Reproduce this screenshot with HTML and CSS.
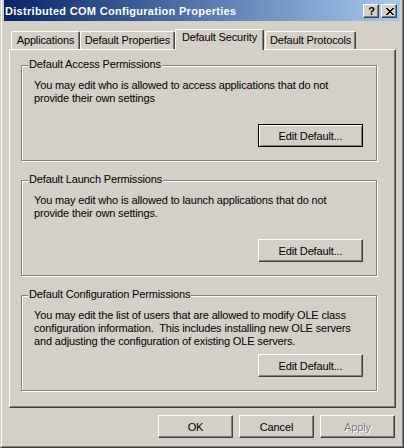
FILE: index.html
```html
<!DOCTYPE html>
<html>
<head>
<meta charset="utf-8">
<link rel="stylesheet" href="styles.css">
</head>
<body>
<div class="window">
  <div class="frame">
    <div class="titlebar">
      <span class="title">Distributed COM Configuration Properties</span>
      <div class="caption-buttons">
        <span class="cap-btn cap-help">?</span>
        <span class="cap-btn cap-close">
          <svg width="8" height="7" viewBox="0 0 8 7" shape-rendering="crispEdges">
            <path fill="#000" d="M0 0h2v1H0zM6 0h2v1H6zM1 1h2v1H1zM5 1h2v1H5zM2 2h4v1H2zM3 3h2v1H3zM2 4h4v1H2zM1 5h2v1H1zM5 5h2v1H5zM0 6h2v1H0zM6 6h2v1H6z"/>
          </svg>
        </span>
      </div>
    </div>
    <div class="content">
      <div class="tabs">
        <div class="tab tab-apps">Applications</div>
        <div class="tab tab-props">Default Properties</div>
        <div class="tab tab-security is-active">Default Security</div>
        <div class="tab tab-protocols">Default Protocols</div>
      </div>
      <div class="panel">
        <div class="group">
          <div class="group-label">Default Access Permissions</div>
          <p class="group-text">You may edit who is allowed to access applications that do not<br>provide their own settings</p>
          <div class="group-actions"><button class="btn btn-edit is-default">Edit Default...</button></div>
        </div>
        <div class="group">
          <div class="group-label">Default Launch Permissions</div>
          <p class="group-text">You may edit who is allowed to launch applications that do not<br>provide their own settings.</p>
          <div class="group-actions"><button class="btn btn-edit">Edit Default...</button></div>
        </div>
        <div class="group">
          <div class="group-label">Default Configuration Permissions</div>
          <p class="group-text">You may edit the list of users that are allowed to modify OLE class<br>configuration information.&nbsp; This includes installing new OLE servers<br>and adjusting the configuration of existing OLE servers.</p>
          <div class="group-actions"><button class="btn btn-edit">Edit Default...</button></div>
        </div>
      </div>
      <div class="dialog-buttons">
        <button class="btn btn-dlg">OK</button>
        <button class="btn btn-dlg">Cancel</button>
        <button class="btn btn-dlg is-disabled">Apply</button>
      </div>
    </div>
  </div>
</div>
</body>
</html>
```
FILE: styles.css
```css
html, body {
  margin: 0;
  padding: 0;
}
body {
  width: 404px;
  height: 448px;
  overflow: hidden;
  background: #D4D0C8;
  font-family: "Liberation Sans", Arial, sans-serif;
  font-size: 11px;
  letter-spacing: -0.15px;
  color: #000;
}
.window {
  box-sizing: border-box;
  width: 404px;
  height: 448px;
  border-left: 1px solid #D4D0C8;
  border-right: 1px solid #404040;
  border-bottom: 1px solid #404040;
  background: #D4D0C8;
}
.frame {
  box-sizing: border-box;
  height: 100%;
  border-left: 1px solid #fff;
  border-right: 1px solid #808080;
  border-bottom: 1px solid #808080;
  padding: 0 2px 2px;
  display: flex;
  flex-direction: column;
}
.titlebar {
  height: 21px;
  background: linear-gradient(to right, #0A246A, #A6CAF0);
  display: flex;
  align-items: center;
  justify-content: space-between;
  padding: 0 3px 0 1px;
}
.title {
  color: #fff;
  font-weight: bold;
  font-size: 11px;
  letter-spacing: 0.3px;
  line-height: 13px;
  padding-top: 1px;
}
.caption-buttons {
  display: flex;
  gap: 2px;
  margin-top: 1px;
}
.cap-btn {
  box-sizing: border-box;
  width: 16px;
  height: 14px;
  background: #D4D0C8;
  border: 1px solid;
  border-color: #fff #404040 #404040 #fff;
  box-shadow: inset -1px -1px 0 #808080;
  display: flex;
  align-items: center;
  justify-content: center;
}
.cap-help {
  font-weight: bold;
  font-size: 11px;
  letter-spacing: 0;
  line-height: 11px;
  padding-left: 1px;
}
.cap-close svg {
  display: block;
  margin-left: 1px;
}
.content {
  display: flex;
  flex-direction: column;
}
.tabs {
  display: flex;
  align-items: flex-end;
  height: 20px;
  margin: 8px 0 0 7px;
}
.tab {
  box-sizing: border-box;
  height: 18px;
  border-top: 1px solid #fff;
  border-left: 1px solid #fff;
  border-right: 1px solid #404040;
  border-radius: 2px 2px 0 0;
  box-shadow: inset -1px 0 0 #808080;
  text-align: center;
  line-height: 15px;
  padding-top: 1px;
  white-space: nowrap;
}
.tab-apps { width: 69px; }
.tab-props { width: 95px; }
.tab-security { width: 89px; }
.tab-protocols { width: 91px; margin-left: 1px; }
.tab.is-active {
  height: 21px;
  margin-bottom: -1px;
  position: relative;
  z-index: 1;
  background: #D4D0C8;
  padding-top: 0;
}
.panel {
  box-sizing: border-box;
  width: 387px;
  height: 359px;
  margin-left: 5px;
  border-top: 1px solid #fff;
  border-left: 1px solid #fff;
  border-right: 1px solid #404040;
  border-bottom: 1px solid #404040;
  box-shadow: inset -1px -1px 0 #808080;
  padding: 15px 0 0 11px;
}
.group {
  position: relative;
  box-sizing: border-box;
  width: 356px;
  height: 96px;
  margin-bottom: 19px;
  border: 1px solid #808080;
  box-shadow: 1px 1px 0 #fff, inset 1px 1px 0 #fff;
  padding: 13px 13px 13px 12px;
  display: flex;
  flex-direction: column;
}
.group-label {
  position: absolute;
  left: 6px;
  top: -8px;
  padding: 0 1px;
  line-height: 13px;
  background: #D4D0C8;
  white-space: nowrap;
}
.group-text {
  margin: 0;
  line-height: 13px;
  white-space: nowrap;
}
.group-actions {
  margin-top: auto;
  display: flex;
  justify-content: flex-end;
}
.btn {
  box-sizing: border-box;
  height: 23px;
  margin: 0;
  padding: 0;
  background: #D4D0C8;
  font-family: "Liberation Sans", Arial, sans-serif;
  font-size: 11px;
  letter-spacing: -0.15px;
  color: #000;
  border: 1px solid;
  border-color: #fff #404040 #404040 #fff;
  box-shadow: inset -1px -1px 0 #808080;
  border-radius: 0;
}
.btn-edit { width: 105px; }
.btn.is-default {
  border-color: #000;
  box-shadow: inset 1px 1px 0 #fff, inset -1px -1px 0 #808080;
}
.dialog-buttons {
  display: flex;
  justify-content: flex-end;
  gap: 6px;
  margin: 7px 5px 0 0;
}
.btn-dlg { width: 75px; }
.btn.is-disabled {
  color: #808080;
  text-shadow: 1px 1px 0 #fff;
}
```
